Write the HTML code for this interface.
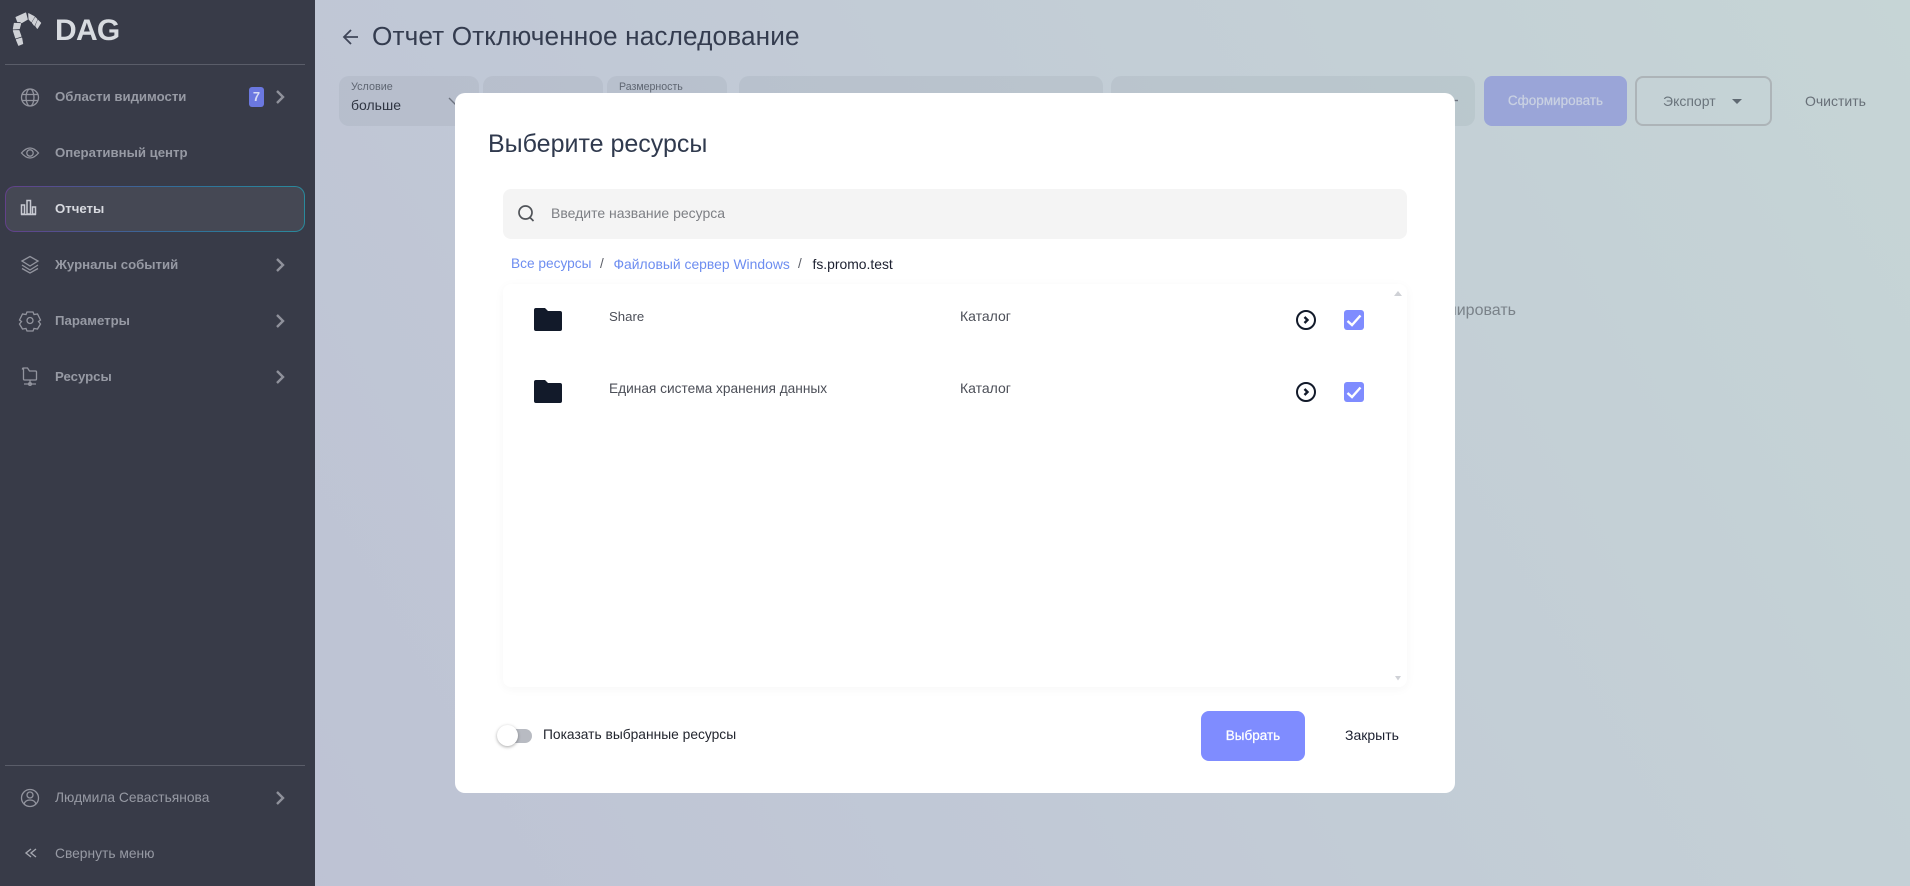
<!DOCTYPE html>
<html lang="ru"><head><meta charset="utf-8"><title>DAG</title>
<style>
html,body{margin:0;padding:0;width:1910px;height:886px;overflow:hidden}
body{position:relative;font-family:"Liberation Sans","Noto Sans CJK SC",sans-serif;background:linear-gradient(60deg,#bcc0d3 0%,#c1c9d6 45%,#c6d5d6 100%)}
.a{position:absolute;white-space:nowrap}
.t{position:absolute;white-space:nowrap;line-height:20px;height:20px}
svg{position:absolute;display:block;overflow:visible}
#side{position:absolute;left:0;top:0;width:315px;height:886px;background:#383b48}
.nav{font-size:13.2px;color:#979aa4;font-weight:bold;left:55px}
.nv2{font-weight:normal;font-size:13.8px}
.chev{fill:none;stroke:#8f919b;stroke-width:2.4}
.ic{fill:none;stroke:#92949e;stroke-width:1.3}
.f{position:absolute;background:rgba(60,70,90,.065);border-radius:10px;top:76px;height:50px}
</style></head><body>
<div class="a" style="left:372px;top:17px;font-size:26.2px;line-height:38px;color:#343c4f;letter-spacing:.12px">Отчет Отключенное наследование</div>
<svg style="left:0;top:0" width="1910" height="886"><path d="M358 37H344M351 30l-7 7 7 7" fill="none" stroke="#3f4658" stroke-width="1.8"/></svg>
<div class="f" style="left:339px;width:140px"></div>
<div class="f" style="left:483px;width:120px"></div>
<div class="f" style="left:607px;width:120px"></div>
<div class="f" style="left:739px;width:364px"></div>
<div class="f" style="left:1111px;width:364px"></div>
<div class="t" style="left:351px;top:77px;font-size:10.8px;color:#5f6672">Условие</div>
<div class="t" style="left:351px;top:95px;font-size:14px;color:#2f3542">больше</div>
<div class="t" style="left:619px;top:77px;font-size:10.6px;color:#5f6672">Размерность</div>
<svg style="left:0;top:0" width="1910" height="886"><path d="M449 98l6 6 6-6" fill="none" stroke="#6e7480" stroke-width="1.4"/><path d="M1453 100.500h5" fill="none" stroke="#6e7480" stroke-width="1.4"/></svg>
<div class="a" style="left:1484px;top:76px;width:143px;height:50px;border-radius:8px;background:#9aa5d8;color:#c9d1e2;font-size:13.5px;-webkit-text-stroke:.25px #c9d1e2;line-height:50px;text-align:center">Сформировать</div>
<div class="a" style="left:1635px;top:76px;width:133px;height:46px;border:2px solid #adb4b8;border-radius:8px"></div>
<div class="t" style="left:1663px;top:91px;font-size:14px;color:#6a747c">Экспорт</div>
<svg style="left:0;top:0" width="1910" height="886"><path d="M1732 99h10l-5 5z" fill="#5f6972"/></svg>
<div class="t" style="left:1805px;top:91px;font-size:14px;color:#687078">Очистить</div>
<div class="t" style="right:394px;top:301px;font-size:16px;color:#7a8289">сформировать</div>

<div id="side"></div>
<svg style="left:0;top:0" width="60" height="60">
<g fill="#cfd1d6" stroke="#cfd1d6" stroke-width="3" stroke-linejoin="round" transform="translate(5,5) scale(.3333)">
<path d="M33 37L62 24L67 43L50 53L46 50L38 50Z"/>
<path d="M71 26L88 35L79 50L72 43Z"/>
<path d="M91 38L96 43L88 61L82 53Z"/>
<path d="M99 46L107 54L97 70L92 63Z"/>
<path d="M28 55L47 56L43 71L25 72Z"/>
<path d="M25 77L42 77L48 94L32 99Z"/>
<path d="M34 104L50 99L53 116L41 121Z"/>
</g></svg>
<div class="a" style="left:55px;top:13px;font-size:30px;line-height:36px;font-weight:bold;color:#d8dbe0;letter-spacing:-.7px">DAG</div>
<div class="a" style="left:5px;top:64px;width:300px;height:1px;background:#5a5d69"></div>
<div class="a" style="left:5px;top:765px;width:300px;height:1px;background:#5a5d69"></div>
<div class="a" style="left:5px;top:186px;width:300px;height:46px;box-sizing:border-box;border-radius:10px;border:1.5px solid transparent;background:linear-gradient(#454854,#454854) padding-box,linear-gradient(90deg,#63418a,#30709a 60%,#2a8a9c) border-box"></div>

<div class="t nav" style="top:87px">Области видимости</div>
<div class="t nav" style="top:143px">Оперативный центр</div>
<div class="t nav" style="top:199px;color:#d8dae0">Отчеты</div>
<div class="t nav" style="top:255px">Журналы событий</div>
<div class="t nav" style="top:311px">Параметры</div>
<div class="t nav" style="top:367px">Ресурсы</div>
<div class="t nav nv2" style="top:788px">Людмила Севастьянова</div>
<div class="t nav nv2" style="top:844px">Свернуть меню</div>
<div class="a" style="left:249px;top:87px;width:15px;height:20px;background:#6b78e0;border-radius:3px;color:#d8dcf5;font-size:13px;font-weight:bold;line-height:20px;text-align:center">7</div>

<svg style="left:0;top:0" width="315" height="886">
<g class="chev"><path d="M277 91l6 6-6 6M277 259l6 6-6 6M277 315l6 6-6 6M277 371l6 6-6 6M277 792l6 6-6 6"/></g>
<g class="ic">
<circle cx="30" cy="97.500" r="8.500"/><ellipse cx="30" cy="97.500" rx="4" ry="8.500"/><path d="M22 94.500h16M22 100.500h16"/>
<path d="M21.500 153c3-3.500 5.500-5 8.500-5s5.500 1.500 8.500 5c-3 3.500-5.500 5-8.500 5s-5.500-1.500-8.500-5z"/><circle cx="30" cy="153" r="3.200"/>
<path d="M22 261l8-4.500 8 4.500-8 5zM22 265l8 5 8-5M22 268.500l8 4.500 8-4.500"/>
<path d="M27 312h6l1 2.500 3.500-.5 3 6-2 1.500 2 2.500-3 5-3.500-.5-1 2.500h-6l-1-2.500-3.500.5-3-5 2-2.500-2-1.500 3-6 3.500.5z"/><circle cx="30" cy="320.500" r="3"/>
<path d="M23.500 369v10a1 1 0 0 0 1 1h11a1 1 0 0 0 1-1v-7a1 1 0 0 0-1-1h-6l-2-3h-4a1 1 0 0 0-1 1zM30 380v3.500M24 384h12"/><circle cx="30" cy="384" r="1.400"/>
<circle cx="30" cy="798" r="8.500"/><circle cx="30" cy="795" r="3"/><path d="M24 804c1-3 3-4 6-4s5 1 6 4"/>
</g>
<g stroke="#c8cad2" stroke-width="1.500" fill="none"><rect x="21.500" y="205" width="3" height="9"/><rect x="27" y="200.500" width="3.500" height="13.500"/><rect x="32.500" y="207" width="3" height="7"/><path d="M21 214.500h15"/></g>
<path d="M31 849l-5 4 5 4M36 849l-5 4 5 4" fill="none" stroke="#a5a7b0" stroke-width="1.400"/>
</svg>

<div class="a" style="left:455px;top:93px;width:1000px;height:700px;background:#fff;border-radius:10px"></div>
<div class="a" style="left:488px;top:126px;font-size:25px;line-height:36px;color:#303a4e">Выберите ресурсы</div>
<div class="a" style="left:503px;top:189px;width:904px;height:50px;background:#f4f4f4;border-radius:8px"></div>
<svg style="left:0;top:0" width="1910" height="886"><circle cx="525.500" cy="212.500" r="6.500" fill="none" stroke="#505358" stroke-width="1.700"/><path d="M530 217.500l3.500 3.500" stroke="#505358" stroke-width="1.700"/></svg>
<div class="t" style="left:551px;top:203px;font-size:14px;color:#7d7f84">Введите название ресурса</div>
<div class="t" style="left:511px;top:254px;font-size:13.7px;color:#6d8df0">Все ресурсы</div>
<div class="t" style="left:600px;top:254px;font-size:13.5px;color:#5a5d66">/</div>
<div class="t" style="left:613.500px;top:254px;font-size:13.9px;color:#6d8df0">Файловый сервер Windows</div>
<div class="t" style="left:798px;top:254px;font-size:13.5px;color:#5a5d66">/</div>
<div class="t" style="left:812.500px;top:254px;font-size:13.9px;color:#1c2030">fs.promo.test</div>
<div class="a" style="left:503px;top:284px;width:904px;height:403px;background:#fff;border-radius:8px;box-shadow:0 2px 10px rgba(40,40,60,.04)"></div>
<svg style="left:0;top:0" width="1910" height="886">
<g fill="#121a2a"><path d="M534 310a2 2 0 0 1 2-2h9l3 3h12a2 2 0 0 1 2 2v16a2 2 0 0 1-2 2h-24a2 2 0 0 1-2-2z"/><path d="M534 382a2 2 0 0 1 2-2h9l3 3h12a2 2 0 0 1 2 2v16a2 2 0 0 1-2 2h-24a2 2 0 0 1-2-2z"/></g>
<g fill="none" stroke="#121a2a" stroke-width="2"><circle cx="1306" cy="320" r="9"/><circle cx="1306" cy="392" r="9"/><path d="M1304.500 317l3 3-3 3M1304.500 389l3 3-3 3" stroke-width="2.400"/></g>
<rect x="1344" y="310" width="20" height="20" rx="3" fill="#7f8cff"/><rect x="1344" y="382" width="20" height="20" rx="3" fill="#7f8cff"/>
<path d="M1347.500 321l4.500 4 8.500-9.500M1347.500 393l4.500 4 8.500-9.500" fill="none" stroke="#fff" stroke-width="2.400"/>
<path d="M1394 296l4-5 4 5z" fill="#cfd1d6"/><path d="M1395 676l3 4.500 3-4.500z" fill="#cfd1d6"/>
</svg>
<div class="t" style="left:609px;top:306.500px;font-size:13.2px;color:#4c4f58">Share</div>
<div class="t" style="left:609px;top:378.500px;font-size:13.7px;color:#4c4f58">Единая система хранения данных</div>
<div class="t" style="left:960px;top:306px;font-size:14px;color:#4c4f58">Каталог</div>
<div class="t" style="left:960px;top:378px;font-size:14px;color:#4c4f58">Каталог</div>
<div class="a" style="left:499px;top:729px;width:33px;height:14px;border-radius:7px;background:#b8bbc2"></div>
<div class="a" style="left:497px;top:725px;width:21px;height:21px;border-radius:50%;background:#fff;box-shadow:0 1px 3px rgba(0,0,0,.35)"></div>
<div class="t" style="left:543px;top:725px;font-size:13.8px;color:#23262f">Показать выбранные ресурсы</div>
<div class="a" style="left:1201px;top:711px;width:104px;height:50px;border-radius:8px;background:#7f8cff;color:#fff;font-size:13.5px;-webkit-text-stroke:.25px #fff;line-height:50px;text-align:center">Выбрать</div>
<div class="t" style="left:1345px;top:725px;font-size:14px;color:#1c2030">Закрыть</div>
</body></html>
